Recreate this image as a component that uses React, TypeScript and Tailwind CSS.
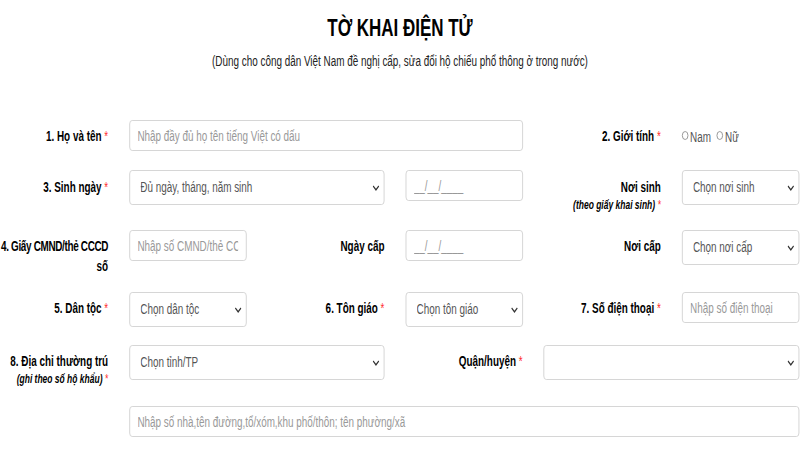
import React from "react";

const Star = () => <span className="font-normal text-[#ff2d2d]"> *</span>;

const Chevron = () => (
  <svg
    className="pointer-events-none absolute right-[7px] top-1/2 -translate-y-1/2"
    width="10"
    height="6"
    viewBox="0 0 10 6"
    fill="none"
  >
    <path d="M1 1 L5 4.8 L9 1" stroke="#333" strokeWidth="1.6" />
  </svg>
);

function Select({ text }: { text: string }) {
  return (
    <div className="relative h-[35px] w-full">
      <select
        defaultValue={text}
        className="h-full w-full appearance-none rounded-[4px] border border-[#cfcfcf] bg-white pl-[15px] pr-[20px] text-[14px] text-[#555] outline-none"
      >
        <option value={text}>{text}</option>
      </select>
      <Chevron />
    </div>
  );
}

function Input({ ph }: { ph: string }) {
  return (
    <input
      placeholder={ph}
      className="h-[31px] w-full rounded-[4px] border border-[#cfcfcf] bg-white px-[11px] text-[14px] text-[#555] outline-none placeholder:text-[#999]"
    />
  );
}

function Label({
  children,
  sub,
  pt = "pt-[6px]",
  tight = false,
}: {
  children: React.ReactNode;
  sub?: React.ReactNode;
  pt?: string;
  tight?: boolean;
}) {
  return (
    <div className={`flex flex-col items-end text-right ${pt}`}>
      <div
        className={`whitespace-nowrap text-[14px] font-bold leading-[20px] text-black ${
          tight ? "tracking-[-0.45px]" : ""
        }`}
      >
        {children}
      </div>
      {sub && (
        <div className="whitespace-nowrap text-[12px] font-bold italic leading-[16px] text-black">
          {sub}
        </div>
      )}
    </div>
  );
}

function Radio({ label }: { label: string }) {
  return (
    <label className="flex items-end">
      <input
        type="radio"
        name="gioitinh"
        className="mb-[5px] h-[9px] w-[9px] appearance-none rounded-full border border-[#8a8a8a] bg-white"
      />
      <span className="ml-[3px]">{label}</span>
    </label>
  );
}

const grid =
  "grid grid-cols-[153px_166px_166px_166px_166px_166px] gap-x-[29.5px] items-start";

export default function App() {
  return (
    <div className="h-[450px] w-[800px] overflow-hidden bg-white">
      <div className="w-[1132px] origin-top-left scale-x-[0.7067] font-['Liberation_Sans',Arial,sans-serif]">
        <div className="pt-[13px] text-center">
          <h1 className="text-[24px] font-bold leading-[30px] text-black">TỜ KHAI ĐIỆN TỬ</h1>
          <p className="mt-[8px] text-[14px] leading-[20px] text-[#222]">
            (Dùng cho công dân Việt Nam đề nghị cấp, sửa đổi hộ chiếu phổ thông ở trong nước)
          </p>
        </div>

        {/* Row 1 */}
        <div className={`${grid} mt-[49px]`}>
          <Label>
            1. Họ và tên<Star />
          </Label>
          <div className="col-span-3">
            <Input ph="Nhập đầy đủ họ tên tiếng Việt có dấu" />
          </div>
          <Label>
            2. Giới tính<Star />
          </Label>
          <div className="flex gap-[8px] pt-[9px] text-[14px] leading-[16px] text-[#555]">
            <Radio label="Nam" />
            <Radio label="Nữ" />
          </div>
        </div>

        {/* Row 2 */}
        <div className={`${grid} mt-[19px]`}>
          <Label pt="pt-[7px]">
            3. Sinh ngày<Star />
          </Label>
          <div className="col-span-2">
            <Select text="Đủ ngày, tháng, năm sinh" />
          </div>
          <Input ph="__/__/____" />
          <Label
            pt="pt-[7px]"
            sub={
              <>
                (theo giấy khai sinh)<Star />
              </>
            }
          >
            Nơi sinh
          </Label>
          <Select text="Chọn nơi sinh" />
        </div>

        {/* Row 3 */}
        <div className={`${grid} mt-[17px]`}>
          <div className="flex flex-col items-end pt-[6px] text-right text-[14px] font-bold leading-[20px] text-black">
            <span className="whitespace-nowrap tracking-[-0.45px]">4. Giấy CMND/thẻ CCCD</span>
            <span>số</span>
          </div>
          <Input ph="Nhập số CMND/thẻ CCCD" />
          <Label>Ngày cấp</Label>
          <Input ph="__/__/____" />
          <Label>Nơi cấp</Label>
          <Select text="Chọn nơi cấp" />
        </div>

        {/* Row 4 */}
        <div className={`${grid} mt-[16px]`}>
          <Label>
            5. Dân tộc<Star />
          </Label>
          <Select text="Chọn dân tộc" />
          <Label>
            6. Tôn giáo<Star />
          </Label>
          <Select text="Chọn tôn giáo" />
          <Label>
            7. Số điện thoại<Star />
          </Label>
          <Input ph="Nhập số điện thoại" />
        </div>

        {/* Row 5 */}
        <div className={`${grid} mt-[18px]`}>
          <Label
            sub={
              <>
                (ghi theo số hộ khẩu)<Star />
              </>
            }
          >
            8. Địa chỉ thường trú
          </Label>
          <div className="col-span-2">
            <Select text="Chọn tỉnh/TP" />
          </div>
          <Label>
            Quận/huyện<Star />
          </Label>
          <div className="col-span-2">
            <Select text="" />
          </div>
        </div>

        {/* Row 6 */}
        <div className={`${grid} mt-[19px]`}>
          <div />
          <div className="col-span-5">
            <Input ph="Nhập số nhà,tên đường,tổ/xóm,khu phố/thôn; tên phường/xã" />
          </div>
        </div>
      </div>
    </div>
  );
}
